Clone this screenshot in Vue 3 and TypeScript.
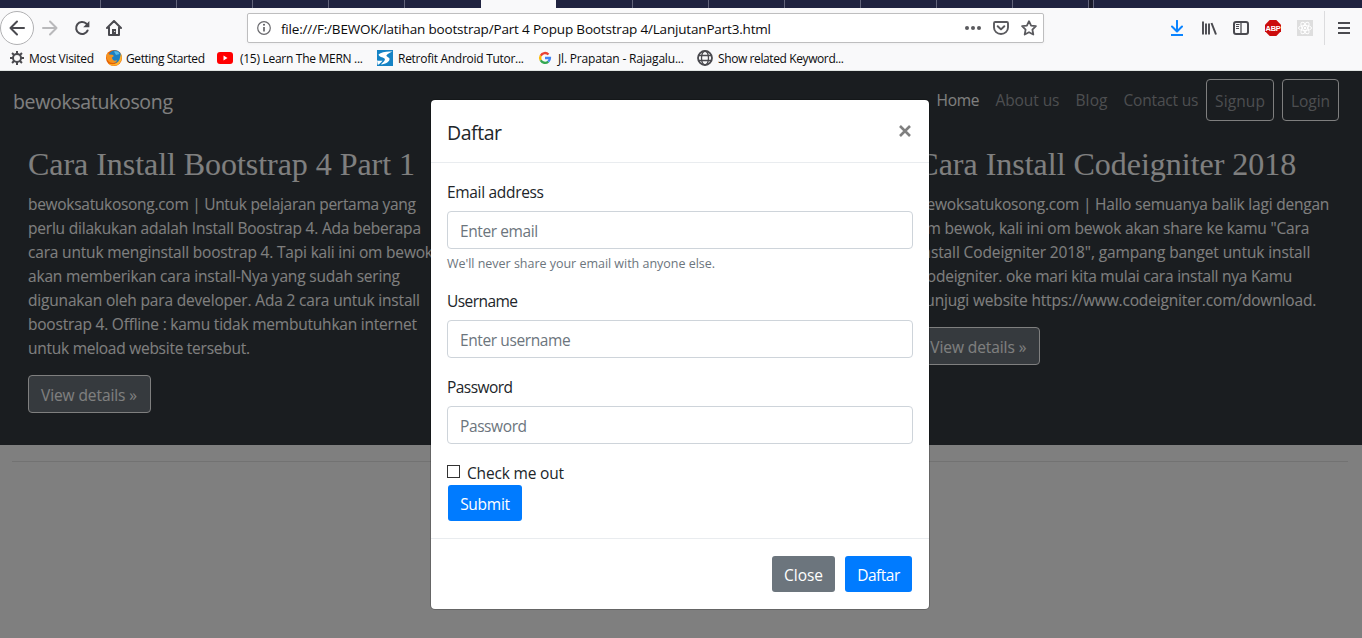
<script setup lang="ts">
import { ref, type Directive } from 'vue'

// Tracks a line of text so that it fills the given width in pixels.
const vFit: Directive<HTMLElement, number> = {
  mounted(el, { value }) {
    const length = (el.textContent ?? '').trim().length
    const natural = el.getBoundingClientRect().width
    el.style.letterSpacing = `${(value - natural) / Math.max(1, length - 1)}px`
    el.style.width = `${value}px`
  },
}

interface Line { text: string; width: number }
interface Article { title: Line; lines: Line[] }

const tabs: { kind: string }[] = [
  { kind: 'first' }, ...Array.from({ length: 4 }, () => ({ kind: 'tab' })), { kind: 'last' },
  { kind: 'active' }, ...Array.from({ length: 7 }, () => ({ kind: 'tab' })), { kind: 'end' },
]

const bookmarks = [
  { icon: 'gear', text: 'Most Visited', width: 65 },
  { icon: 'firefox', text: 'Getting Started', width: 79 },
  { icon: 'youtube', text: '(15) Learn The MERN ...', width: 123 },
  { icon: 'retrofit', text: 'Retrofit Android Tutor...', width: 126 },
  { icon: 'google', text: 'Jl. Prapatan - Rajagalu...', width: 126 },
  { icon: 'globe', text: 'Show related Keyword...', width: 126 },
]

const links = [
  { text: 'Home', width: 43, kind: 'active' },
  { text: 'About us', width: 64, kind: '' },
  { text: 'Blog', width: 32, kind: '' },
  { text: 'Contact us', width: 75, kind: '' },
  { text: 'Signup', width: 50, kind: 'boxed' },
  { text: 'Login', width: 39, kind: 'boxed' },
]

const articles: (Article | null)[] = [
  {
    title: { text: 'Cara Install Bootstrap 4 Part 1', width: 387 },
    lines: [
      { text: 'bewoksatukosong.com | Untuk pelajaran pertama yang', width: 388 },
      { text: 'perlu dilakukan adalah Install Boostrap 4. Ada beberapa', width: 393 },
      { text: 'cara untuk menginstall boostrap 4. Tapi kali ini om bewok', width: 405 },
      { text: 'akan memberikan cara install-Nya yang sudah sering', width: 372 },
      { text: 'digunakan oleh para developer. Ada 2 cara untuk install', width: 392 },
      { text: 'boostrap 4. Offline : kamu tidak membutuhkan internet', width: 389 },
      { text: 'untuk meload website tersebut.', width: 222 },
    ],
  },
  null,
  {
    title: { text: 'Cara Install Codeigniter 2018', width: 379 },
    lines: [
      { text: 'bewoksatukosong.com | Hallo semuanya balik lagi dengan', width: 412 },
      { text: 'om bewok, kali ini om bewok akan share ke kamu "Cara', width: 392 },
      { text: 'Install Codeigniter 2018", gampang banget untuk install', width: 393 },
      { text: 'Codeigniter. oke mari kita mulai cara install nya Kamu', width: 375 },
      { text: 'kunjugi website https://www.codeigniter.com/download.', width: 399 },
    ],
  },
]

const email = ref('')
const username = ref('')
const password = ref('')
</script>

<template>
  <div class="window">
    <div class="tabstrip">
      <i v-for="(tab, n) in tabs" :key="n" :class="tab.kind"></i>
    </div>

    <header class="chrome">
      <div class="toolbar">
        <div class="left-tools">
          <span class="back">
            <svg width="16" height="16" viewBox="0 0 16 16"><path d="M15 8H1.5M8 1.5 1.5 8 8 14.5" fill="none" stroke="#4a4a4f" stroke-width="2" stroke-linecap="round" stroke-linejoin="round" /></svg>
          </span>
          <svg width="16" height="16" viewBox="0 0 16 16"><path d="M1 8h13.5M8 1.5 14.5 8 8 14.5" fill="none" stroke="#b9b9bb" stroke-width="2" stroke-linecap="round" stroke-linejoin="round" /></svg>
          <svg width="16" height="16" viewBox="0 0 16 16"><path d="M13.600 10.500A6 6 0 1 1 12.200 3.600L13 4.400" fill="none" stroke="#4a4a4f" stroke-width="2" stroke-linecap="round" /><path d="M15.400 1v6.200H9.200z" fill="#4a4a4f" /></svg>
          <svg width="16" height="16" viewBox="0 0 16 16"><path d="M1 8 8 1l7 7M3 7.400V15h10V7.400" fill="none" stroke="#4a4a4f" stroke-width="2" stroke-linecap="round" stroke-linejoin="round" /><path d="M6 15V9h4v6z" fill="#4a4a4f" /><path d="M8.200 11h1v1h-1z" fill="#fff" /></svg>
        </div>
        <div class="urlbar">
          <svg width="14" height="14" viewBox="0 0 14 14"><circle cx="7" cy="7" r="6.300" fill="none" stroke="#6a6a6e" stroke-width="1.200" /><path d="M7 6v4.500" stroke="#5a5a5e" stroke-width="1.600" /><circle cx="7" cy="3.800" r="1" fill="#5a5a5e" /></svg>
          <span v-fit="490" class="url">file:///F:/BEWOK/latihan bootstrap/Part 4 Popup Bootstrap 4/LanjutanPart3.html</span>
          <svg class="dots" width="16" height="16" viewBox="0 0 16 16"><g fill="#5a5a5e"><circle cx="2" cy="8" r="2" /><circle cx="8" cy="8" r="2" /><circle cx="14" cy="8" r="2" /></g></svg>
          <svg width="16" height="16" viewBox="0 0 16 16"><path d="M2.200 2h11.600c.7 0 1.200.5 1.200 1.200V7.500a7 6.500 0 0 1-14 0V3.200C1 2.500 1.500 2 2.200 2z" fill="none" stroke="#5a5a5e" stroke-width="1.900" /><path d="M4.700 6.200 8 9.400l3.300-3.200" fill="none" stroke="#5a5a5e" stroke-width="2" stroke-linecap="round" stroke-linejoin="round" /></svg>
          <svg width="16" height="16" viewBox="0 0 16 16"><path d="m8 1.200 2.100 4.400 4.800.6-3.500 3.400.9 4.900L8 12.200l-4.300 2.300.9-4.900L1.100 6.200l4.800-.6z" fill="none" stroke="#5a5a5e" stroke-width="1.800" stroke-linejoin="round" /></svg>
        </div>
        <div class="right-tools">
          <svg width="16" height="16" viewBox="0 0 16 16"><path d="M8 .8V11M3 6.500l5 5 5-5" fill="none" stroke="#0a84ff" stroke-width="2" stroke-linecap="round" stroke-linejoin="round" /><path d="M2 15h12" stroke="#0a84ff" stroke-width="2" /></svg>
          <svg width="16" height="16" viewBox="0 0 16 16"><path d="M2 1.500v13M5 3.500v11M8 3.500v11" stroke="#4a4a4f" stroke-width="1.900" /><path d="m10.500 3 4.500 11.500" stroke="#4a4a4f" stroke-width="2" /></svg>
          <svg width="16" height="16" viewBox="0 0 16 16"><rect x="1" y="2" width="14" height="12" rx="2" fill="none" stroke="#4a4a4f" stroke-width="2" /><path d="M8 2v12" stroke="#4a4a4f" stroke-width="1.300" /><path d="M3 4.500h3.500M3 6.500h3M3 8.500h3" stroke="#4a4a4f" /></svg>
          <svg class="stop" width="16" height="16" viewBox="0 0 16 16"><path d="M4.700 0h6.600L16 4.700v6.600L11.300 16H4.700L0 11.300V4.700z" fill="#cc0c0c" /><text x="8" y="10.800" text-anchor="middle" class="abp">ABP</text></svg>
          <svg width="16" height="16" viewBox="0 0 16 16"><path d="M0 0h16v16H0z" fill="#dedede" /><g fill="none" stroke="#fff" stroke-width="1"><ellipse cx="8" cy="8" rx="6.500" ry="2.500" /><ellipse cx="8" cy="8" rx="6.500" ry="2.500" transform="rotate(60 8 8)" /><ellipse cx="8" cy="8" rx="6.500" ry="2.500" transform="rotate(120 8 8)" /></g><circle cx="8" cy="8" r="1.200" fill="#fff" /></svg>
        </div>
        <div class="menu">
          <svg width="12" height="12" viewBox="0 0 12 12"><path d="M0 1h12M0 6h12M0 11h12" stroke="#4a4a4f" stroke-width="2" /></svg>
        </div>
      </div>

      <nav class="bookmarks">
        <span v-for="mark in bookmarks" :key="mark.text" class="bookmark" :class="mark.icon">
          <svg width="16" height="16" viewBox="0 0 16 16">
            <g v-if="mark.icon === 'gear'" fill="none" stroke="#4a4a4f"><circle cx="8" cy="8" r="4" stroke-width="2" /><path d="M8 1v3M8 12v3M1 8h3M12 8h3M3.050 3.050l2 2M10.950 10.950l2 2M3.050 12.950l2-2M10.950 5.050l2-2" stroke-width="2" /></g>
            <g v-else-if="mark.icon === 'firefox'"><circle cx="8" cy="8" r="8" fill="#e66000" /><circle cx="9" cy="6.500" r="6.300" fill="#1e7fc2" /><path d="M8 1.500c3-.8 5 .5 5.500 2.500L10 5z" fill="#57b9e8" /><path d="M.5 4.500 2 2.500l1 2 3.500.2L8 6 6 7.500c0 3 3 4 5 2.500 0 2-2 3-4 3C3 13 0 10 .5 4.500z" fill="#f7931e" /><path d="M15 3.500c1.500 4 .7 8-2.500 10.700C9 16.500 4.500 16 2 13c4 2.500 10 1 11.500-3.500z" fill="#ffb52e" /></g>
            <g v-else-if="mark.icon === 'youtube'"><rect y="2" width="16" height="12" rx="3" fill="#f00" /><path d="m6.500 5.500 4 2.500-4 2.500z" fill="#fff" /></g>
            <g v-else-if="mark.icon === 'retrofit'"><path d="M0 0h16v16H0z" fill="#1583c5" /><path d="M15.500 1.500C10 1 4 2 1.500 4.500 2 7 5.500 7 7.500 8.500 9 10 6 12 4 14.500 9 14 13 11.500 12.500 8.500 11.500 7 9 6.500 9.500 5.200c.8-1.500 4-2.500 6-3.700z" fill="#fff" /><path d="M0 10.500c2 .2 4 .3 5.500 0C4.500 12 3 13.500.8 15z" fill="#fff" /></g>
            <g v-else-if="mark.icon === 'google'" fill="none" stroke-width="2.400"><path d="M11.500 4.500A4.900 4.900 0 0 0 3.700 5.700" stroke="#ea4335" /><path d="M3.700 5.700a4.900 4.900 0 0 0 0 4.600" stroke="#fbbc05" /><path d="M3.700 10.300a4.900 4.900 0 0 0 7.600 1.300" stroke="#34a853" /><path d="M11.300 11.600A4.900 4.900 0 0 0 12.900 8H8" stroke="#4285f4" /></g>
            <g v-else fill="none" stroke="#4a4a4f" stroke-width="1.300"><circle cx="8" cy="8" r="7" stroke-width="1.800" /><ellipse cx="8" cy="8" rx="3.500" ry="7" /><path d="M1.500 5.500h13M1.500 10.500h13" /></g>
          </svg>
          <span v-fit="mark.width" class="caption">{{ mark.text }}</span>
        </span>
      </nav>
    </header>

    <main class="page">
      <section class="hero">
        <nav class="navbar">
          <span v-fit="160" class="brand">bewoksatukosong</span>
          <div class="links">
            <a v-for="link in links" :key="link.text" :class="link.kind"><span v-fit="link.width">{{ link.text }}</span></a>
          </div>
        </nav>
        <div class="articles">
          <article v-for="(article, n) in articles" :key="n">
            <template v-if="article">
              <h2><span v-fit="article.title.width">{{ article.title.text }}</span></h2>
              <p>
                <span v-for="line in article.lines" :key="line.text" v-fit="line.width" class="line">{{ line.text }}</span>
              </p>
              <a class="details"><span v-fit="96">View details »</span></a>
            </template>
          </article>
        </div>
      </section>
      <hr />

      <div class="backdrop">
        <div class="modal" role="dialog">
          <div class="modal-header">
            <h5><span v-fit="55">Daftar</span></h5>
            <svg width="12" height="12" viewBox="0 0 12 12"><path d="m1 1 10 10M11 1 1 11" stroke="#7f7f7f" stroke-width="2.600" /></svg>
          </div>
          <form class="modal-body" @submit.prevent>
            <div class="group">
              <label><span v-fit="97">Email address</span></label>
              <input v-model="email" type="text" placeholder="Enter email" />
              <small><span v-fit="268">We'll never share your email with anyone else.</span></small>
            </div>
            <div class="group">
              <label><span v-fit="71">Username</span></label>
              <input v-model="username" type="text" placeholder="Enter username" />
            </div>
            <div class="group">
              <label><span v-fit="66">Password</span></label>
              <input v-model="password" type="password" placeholder="Password" />
            </div>
            <div class="check"><i></i><span v-fit="97">Check me out</span></div>
            <button class="primary"><span v-fit="50">Submit</span></button>
          </form>
          <div class="modal-footer">
            <button class="secondary"><span v-fit="39">Close</span></button>
            <button class="primary"><span v-fit="43">Daftar</span></button>
          </div>
        </div>
      </div>
    </main>
  </div>
</template>

<style>
body { margin: 0; overflow: hidden; }
</style>

<style scoped>
* { box-sizing: border-box; }
svg { display: block; flex: none; }
span { white-space: nowrap; }
.window { width: 1362px; height: 638px; display: flex; flex-direction: column; overflow: hidden; font: 15.5px/24px "Open Sans", sans-serif; color: #212529; }

.tabstrip { height: 8px; display: flex; background: #202340; flex: none; }
.tabstrip i { width: 76px; border-right: 1px solid #62647b; flex: none; }
.tabstrip .first { width: 101px; }
.tabstrip .last { width: 76px; border: 0; }
.tabstrip .active { width: 75px; border: 0; background: #f9f9fa; }
.tabstrip i.active + i { width: 77px; }
.tabstrip .end { width: 5px; background: #1a1b2b; }

.chrome { height: 63px; flex: none; background: #f9f9fa; border-bottom: 1px solid #e0e4e2; }
.toolbar { height: 40px; display: flex; align-items: center; }
.left-tools { display: flex; align-items: center; gap: 16px; width: 247px; }
.left-tools .back { width: 34px; height: 34px; margin-right: -8px; border: 1px solid #b1b1b3; border-radius: 50%; background: #fff; display: flex; align-items: center; justify-content: center; }
.urlbar { width: 797px; height: 30px; border: 1px solid #bebebf; border-radius: 2px; background: #fff; display: flex; align-items: center; padding: 0 6px 0 9px; gap: 12px; box-shadow: 0 1px 3px rgba(0, 0, 0, .04); }
.url { margin-left: -2px; margin-top: 1px; font: 13.5px/20px "Open Sans", sans-serif; color: #0c0c0d; display: inline-block; }
.dots { margin-left: auto; }
.right-tools { display: flex; gap: 16px; margin-left: 125px; }
.menu { height: 34px; border-left: 1px solid #dcdcde; margin-left: 11px; padding-left: 13px; display: flex; align-items: center; }
.stop { overflow: visible; }
.abp { font: bold 7.5px "Liberation Sans", sans-serif; letter-spacing: -.3px; fill: #fff; }
.bookmarks { display: grid; grid-template-columns: 97px 111px 160px 160px 160px 160px; padding-left: 9px; height: 20px; align-items: center; }
.bookmark { display: flex; align-items: center; gap: 4px; }
.bookmark.youtube { gap: 7px; }
.bookmark.retrofit, .bookmark.google, .bookmark.globe { gap: 5px; }
.caption { display: inline-block; font: 12px/16px "Open Sans", sans-serif; color: #0c0c0d; margin-top: 1px; }

.page { position: relative; flex: 1; background: #fff; overflow: hidden; }
.hero { height: 374px; background: #343a40; color: #fff; padding-top: 8px; }
.navbar { height: 42px; display: flex; justify-content: space-between; align-items: center; padding: 0 23px 0 13px; }
.brand { font-size: 19.5px; line-height: 30px; padding-top: 4px; }
.links { display: flex; align-items: center; color: #9a9da0; }
.links a { padding: 0 8px; line-height: 24px; }
.links a:not(.boxed) { margin: 0 -.5px 0 .5px; }
.links .active { color: #fff; }
.links .boxed { border: 1px solid #fff; border-radius: 4px; padding: 9px 8px 7px; }
.links .boxed + .boxed { margin-left: 8px; }
.links span, .brand, h2 span, h5 span, label span, small span, .check span, button span, .details span { display: inline-block; }
.articles { display: grid; grid-template-columns: repeat(3, 444.67px); padding: 24px 0 0 28px; }
h2 { margin: 0 0 8px; font: 400 32px/38px "Liberation Serif", serif; }
p { margin: 0 0 16px; display: flex; flex-direction: column; align-items: flex-start; }
.line { height: 24px; line-height: 26px; }
.details { display: inline-block; width: 123px; height: 38px; border: 1px solid #fff; border-radius: 4px; background: #6c757d; padding: 7px 12px; }
hr { margin: 16px 14px 0 12px; border: 0; border-top: 1px solid #e5e5e5; }

.backdrop { position: absolute; inset: 0; background: rgba(0, 0, 0, .5); padding: 28px 0 0 430px; }
.modal { width: 500px; height: 511px; background: #fff; background-clip: padding-box; border: 1px solid rgba(0, 0, 0, .2); border-radius: 5px; }
.modal-header { height: 63px; padding: 16px 18.5px 0 16px; border-bottom: 1px solid #e9ecef; display: flex; justify-content: space-between; }
.modal-header svg { margin-top: 9px; }
h5 { margin: 0; font: 400 19.5px/34px "Open Sans", sans-serif; }
.modal-body { height: 376px; padding: 16px; border-bottom: 1px solid #e9ecef; }
.group { margin-bottom: 16px; }
label { display: block; height: 24px; line-height: 26px; margin-bottom: 8px; }
input { display: block; width: 466px; height: 38px; border: 1px solid #ced4da; border-radius: 4px; background: #fff; padding: 3px 12px 1px; font: 15.5px/24px "Open Sans", sans-serif; letter-spacing: -.4px; outline: 0; }
input::placeholder { color: #6c757d; opacity: 1; }
small { display: block; height: 19px; margin: 4px 0 16px; font-size: 12.5px; line-height: 21px; color: #6c757d; }
.check { height: 24px; display: flex; line-height: 26px; }
.check i { width: 13px; height: 13px; border: 1px solid #333; background: #fff; margin: 5px 7px 0 0; }
button { height: 38px; border: 1px solid transparent; background-clip: padding-box; border-radius: 4px; padding: 2px 12px 0; font: 15.5px/24px "Open Sans", sans-serif; color: #fff; display: block; }
.primary { background-color: #007bff; }
.secondary { background-color: #6c757d; }
.modal-footer { padding: 16px; display: flex; justify-content: flex-end; gap: 8px; }
</style>
